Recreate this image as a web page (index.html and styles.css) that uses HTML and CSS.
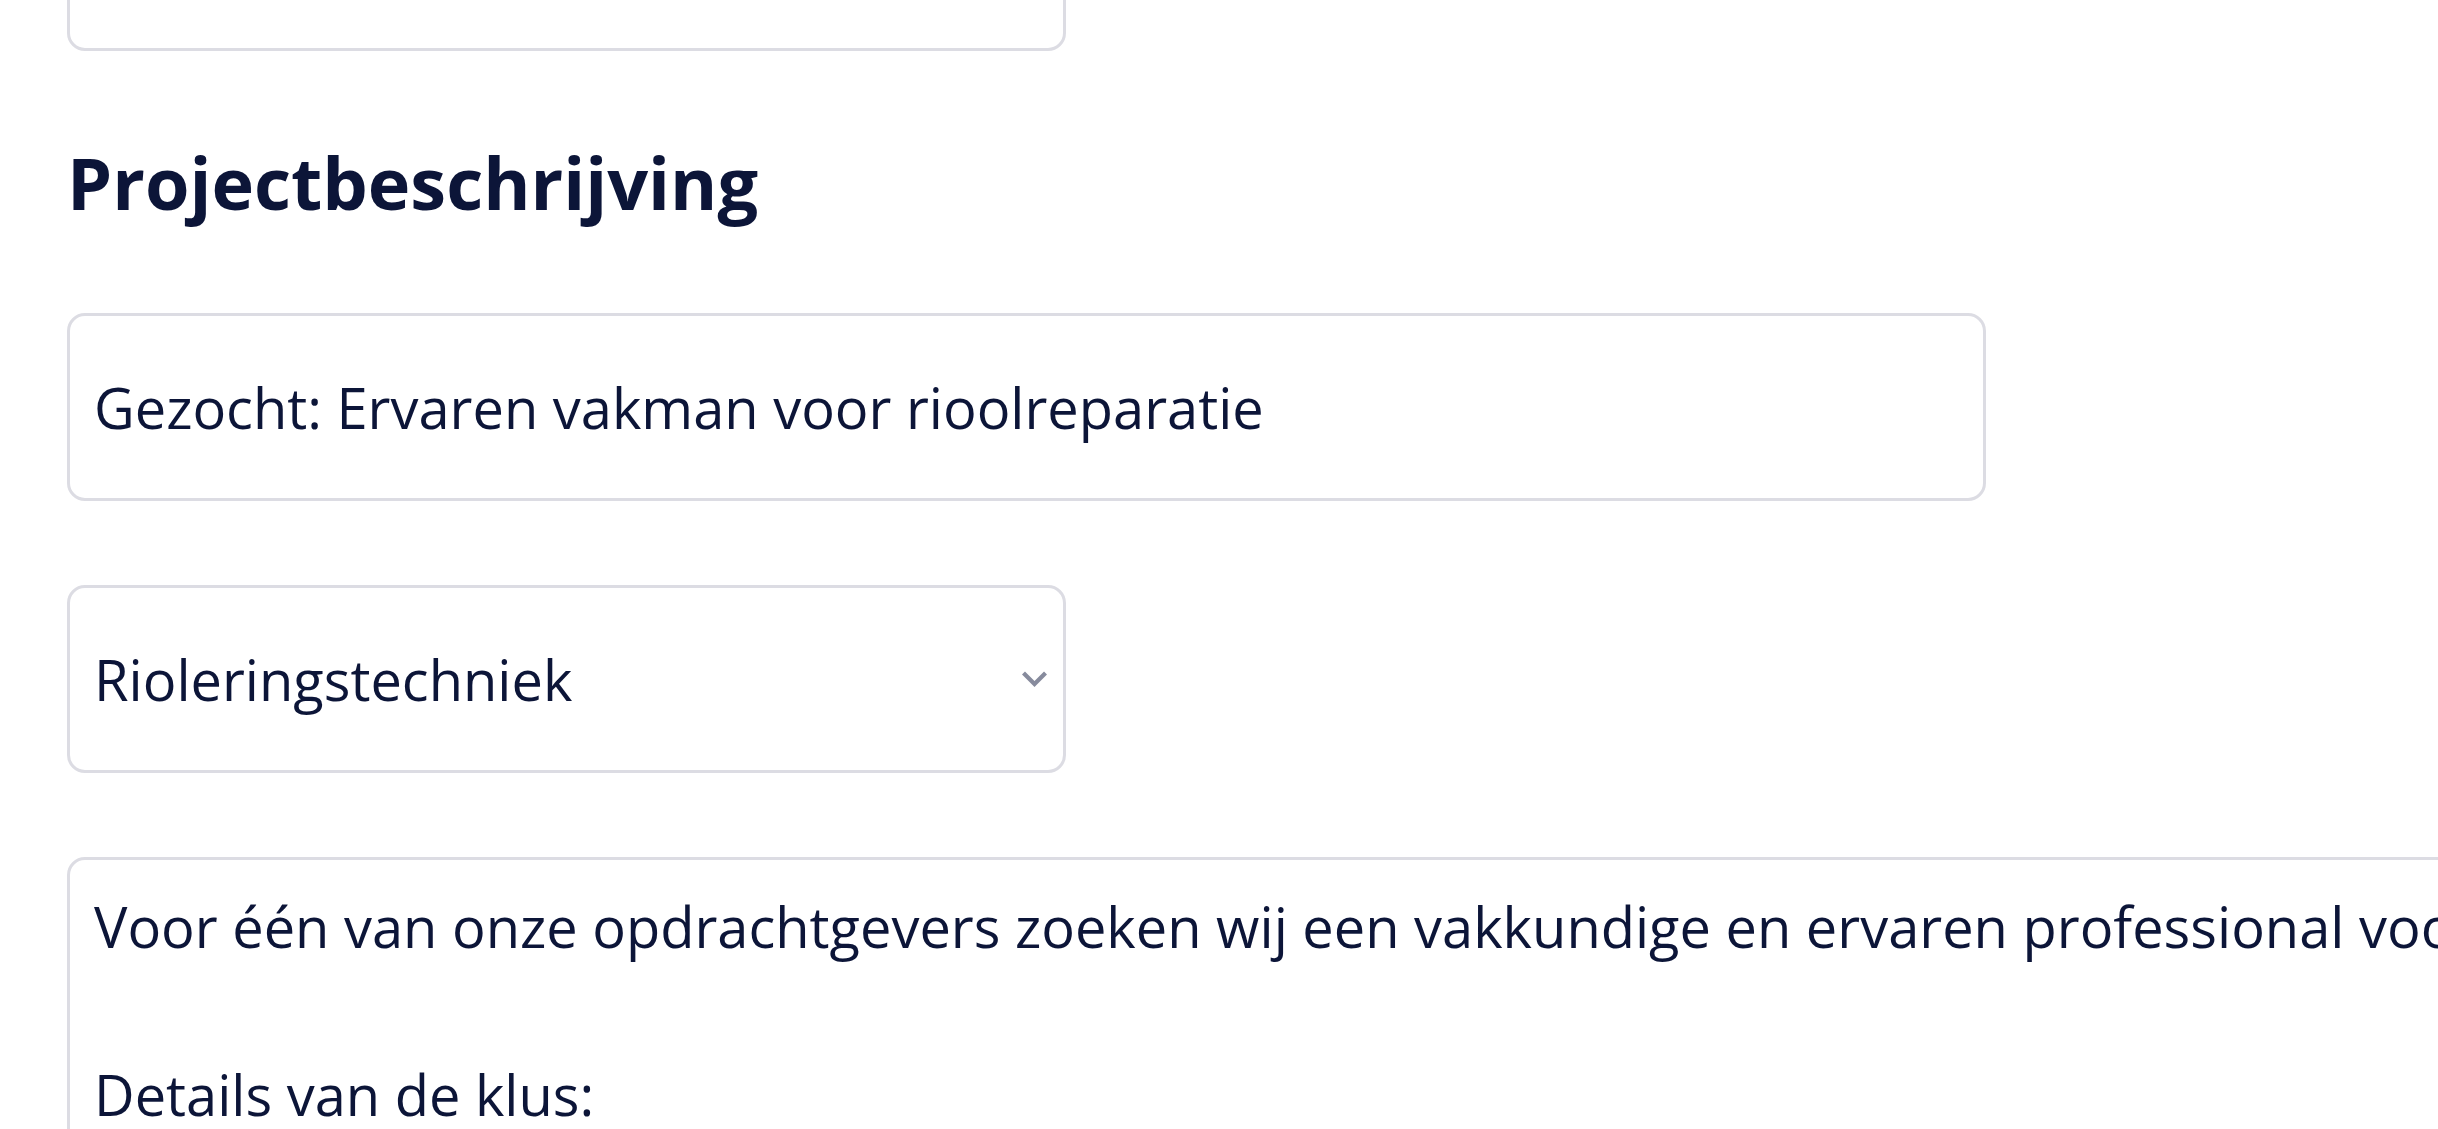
FILE: index.html
```html
<!DOCTYPE html>
<html lang="nl">
<head>
<meta charset="utf-8">
<title>Projectbeschrijving</title>
<link rel="stylesheet" href="styles.css">
</head>
<body>
<main class="form">
  <div class="field field--half field--prev"></div>
  <h2 class="section-title">Projectbeschrijving</h2>
  <input class="field field--wide" type="text" value="Gezocht: Ervaren vakman voor rioolreparatie">
  <div class="select-wrap">
    <select class="field field--half field--select">
      <option>Rioleringstechniek</option>
    </select>
    <svg class="chevron" width="27" height="17" viewBox="0 0 27 17" aria-hidden="true">
      <polyline points="2.5,2.5 13.5,13.5 24.5,2.5" fill="none" stroke="#878b9d" stroke-width="4.2" stroke-linecap="butt" stroke-linejoin="miter"/>
    </svg>
  </div>
  <textarea class="field field--area">Voor één van onze opdrachtgevers zoeken wij een vakkundige en ervaren professional voor het herstellen van een rioolleiding.

Details van de klus:
- Lokaliseren en herstellen van de lekkage in de rioolleiding
- Vervangen van beschadigde buisdelen</textarea>
</main>
</body>
</html>
```

FILE: styles.css
```css
* {
  box-sizing: border-box;
}

html,
body {
  margin: 0;
  padding: 0;
  overflow: hidden;
  background: #ffffff;
}

body {
  font-family: "Open Sans", "Noto Sans", sans-serif;
  color: #0c1538;
}

.form {
  display: flex;
  flex-direction: column;
  align-items: flex-start;
  gap: 84px;
  padding-left: 67px;
}

.field {
  display: block;
  margin: 0;
  font-family: "Open Sans", "Noto Sans", sans-serif;
  font-size: 56px;
  line-height: 84px;
  color: #0c1538;
  background: #ffffff;
  border: 3px solid #dcdce3;
  border-radius: 18px;
  outline: none;
}

.field--prev {
  height: 189px;
  margin-top: -138px;
}

.field--half {
  width: 999px;
}

.field--wide {
  width: 1919px;
  height: 188px;
  padding: 0 24px;
}

.section-title {
  margin: 0;
  font-size: 72px;
  font-weight: 700;
  line-height: 94px;
  color: #0c1538;
  letter-spacing: 0;
}

.select-wrap {
  position: relative;
}

.field--select {
  height: 188px;
  padding: 0 24px;
  -webkit-appearance: none;
  appearance: none;
}

.chevron {
  position: absolute;
  right: 18px;
  top: 50%;
  transform: translateY(-50%);
  pointer-events: none;
}

.field--area {
  width: 4200px;
  height: 800px;
  padding: 24px;
  resize: none;
  overflow: hidden;
  white-space: pre-wrap;
}
```
